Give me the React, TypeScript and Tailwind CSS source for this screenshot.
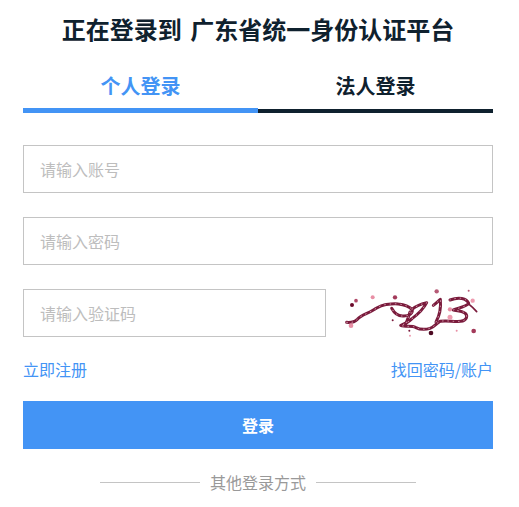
const strokes = [
  "M50 127 C62 128 72 128 82 118 C95 104 112 102 130 90 C142 84 150 76 165 74 C180 72 192 70 205 72 C222 74 236 78 246 88 C250 100 238 108 222 108 C204 110 192 98 185 85",
  "M246 88 C258 78 274 72 290 68 C280 88 262 104 246 116 C238 124 226 132 212 136 C226 142 246 136 256 142 C268 148 284 150 300 145 C314 140 318 130 330 124 C350 120 370 126 392 124 C410 122 414 108 406 100 C396 92 380 92 370 90 C384 84 410 80 416 70 C410 54 386 50 360 60",
  "M240 96 C236 108 232 122 226 134",
  "M310 76 C318 70 324 64 331 58 C333 78 330 104 318 126",
];

export default function App() {
  const font = { fontFamily: '"Noto Sans CJK SC", sans-serif' };
  return (
    <div style={font} className="w-[519px] h-[507px] overflow-hidden bg-white pl-[23px] pr-[26px] pt-[12px] text-[#0f212e]">
      <h1 className="h-[34px] text-center text-[24px] leading-[34px] font-bold [word-spacing:3px]">正在登录到 广东省统一身份认证平台</h1>
      <div className="mt-[20px] flex h-[47px]">
        <div className="flex flex-1 items-start justify-center border-b-[5px] border-[#4394f5] pt-[6px] text-[20px] leading-[28px] font-bold text-[#4394f5]">个人登录</div>
        <div className="flex flex-1 items-start justify-center pt-[6px] text-[20px] leading-[28px] font-bold border-b-[4px] border-[#0f212e]">法人登录</div>
      </div>
      <div className="mt-[32px] flex flex-col gap-[24px]">
        <input readOnly placeholder="请输入账号" className="h-[48px] w-full border border-[#c4c4c4] px-4 text-[16px] outline-none placeholder:text-[#bdbdbd]" />
        <input readOnly placeholder="请输入密码" className="h-[48px] w-full border border-[#c4c4c4] px-4 text-[16px] outline-none placeholder:text-[#bdbdbd]" />
        <div className="flex h-[48px]">
          <input readOnly placeholder="请输入验证码" className="h-[48px] w-[303px] border border-[#c4c4c4] px-4 text-[16px] outline-none placeholder:text-[#bdbdbd]" />
          <svg width="167" height="48" viewBox="-12 27 501 144" fill="none">
            <g strokeLinecap="round" strokeLinejoin="round">
              {strokes.map((d) => (
                <path key={d} d={d} stroke="#7a1b3c" strokeWidth="9" />
              ))}
              {strokes.map((d) => (
                <path key={`${d}-speck`} d={d} stroke="#e8b8c6" strokeWidth="2.5" strokeDasharray="2 14" />
              ))}
              <path d="M414 70 C424 78 432 86 440 95" stroke="#7a1b3c" strokeWidth="5" />
            </g>
            <circle cx="66" cy="75" r="6" fill="#6a0a2a" />
            <circle cx="78" cy="62" r="5.5" fill="#b04a68" />
            <circle cx="128" cy="52" r="6" fill="#e88fa5" />
            <circle cx="195" cy="52" r="6.5" fill="#a33a5a" />
            <circle cx="320" cy="34" r="6.5" fill="#b65a76" />
            <circle cx="416" cy="32" r="3" fill="#b65a76" />
            <circle cx="428" cy="62" r="6.5" fill="#ee9cb0" />
            <circle cx="360" cy="88" r="6.5" fill="#e88fa5" />
            <circle cx="360" cy="112" r="7.5" fill="#ee9cb0" />
            <circle cx="63" cy="137" r="7" fill="#e88fa5" />
            <circle cx="188" cy="121" r="3" fill="#7a1b3c" />
            <circle cx="238" cy="152" r="3" fill="#7a1b3c" />
            <circle cx="240" cy="167" r="3" fill="#ee9cb0" />
            <circle cx="303" cy="159" r="7" fill="#4d0a22" />
            <circle cx="380" cy="152" r="3" fill="#e88fa5" />
            <circle cx="431" cy="153" r="7" fill="#a33a5a" />
          </svg>
        </div>
      </div>
      <div className="mt-[20px] flex h-[24px] items-center justify-between text-[16px] leading-[24px] text-[#4394f5]">
        <span>立即注册</span>
        <span>找回密码/账户</span>
      </div>
      <button className="mt-[20px] block h-[48px] w-full bg-[#4394f5] text-[16px] font-bold text-white">登录</button>
      <div className="mt-[21px] flex h-[24px] items-center justify-center gap-[10px] text-[16px] leading-[24px] text-[#999999]">
        <span className="h-px w-[100px] bg-[#c4c4c4]" />
        <span>其他登录方式</span>
        <span className="h-px w-[100px] bg-[#c4c4c4]" />
      </div>
    </div>
  );
}
